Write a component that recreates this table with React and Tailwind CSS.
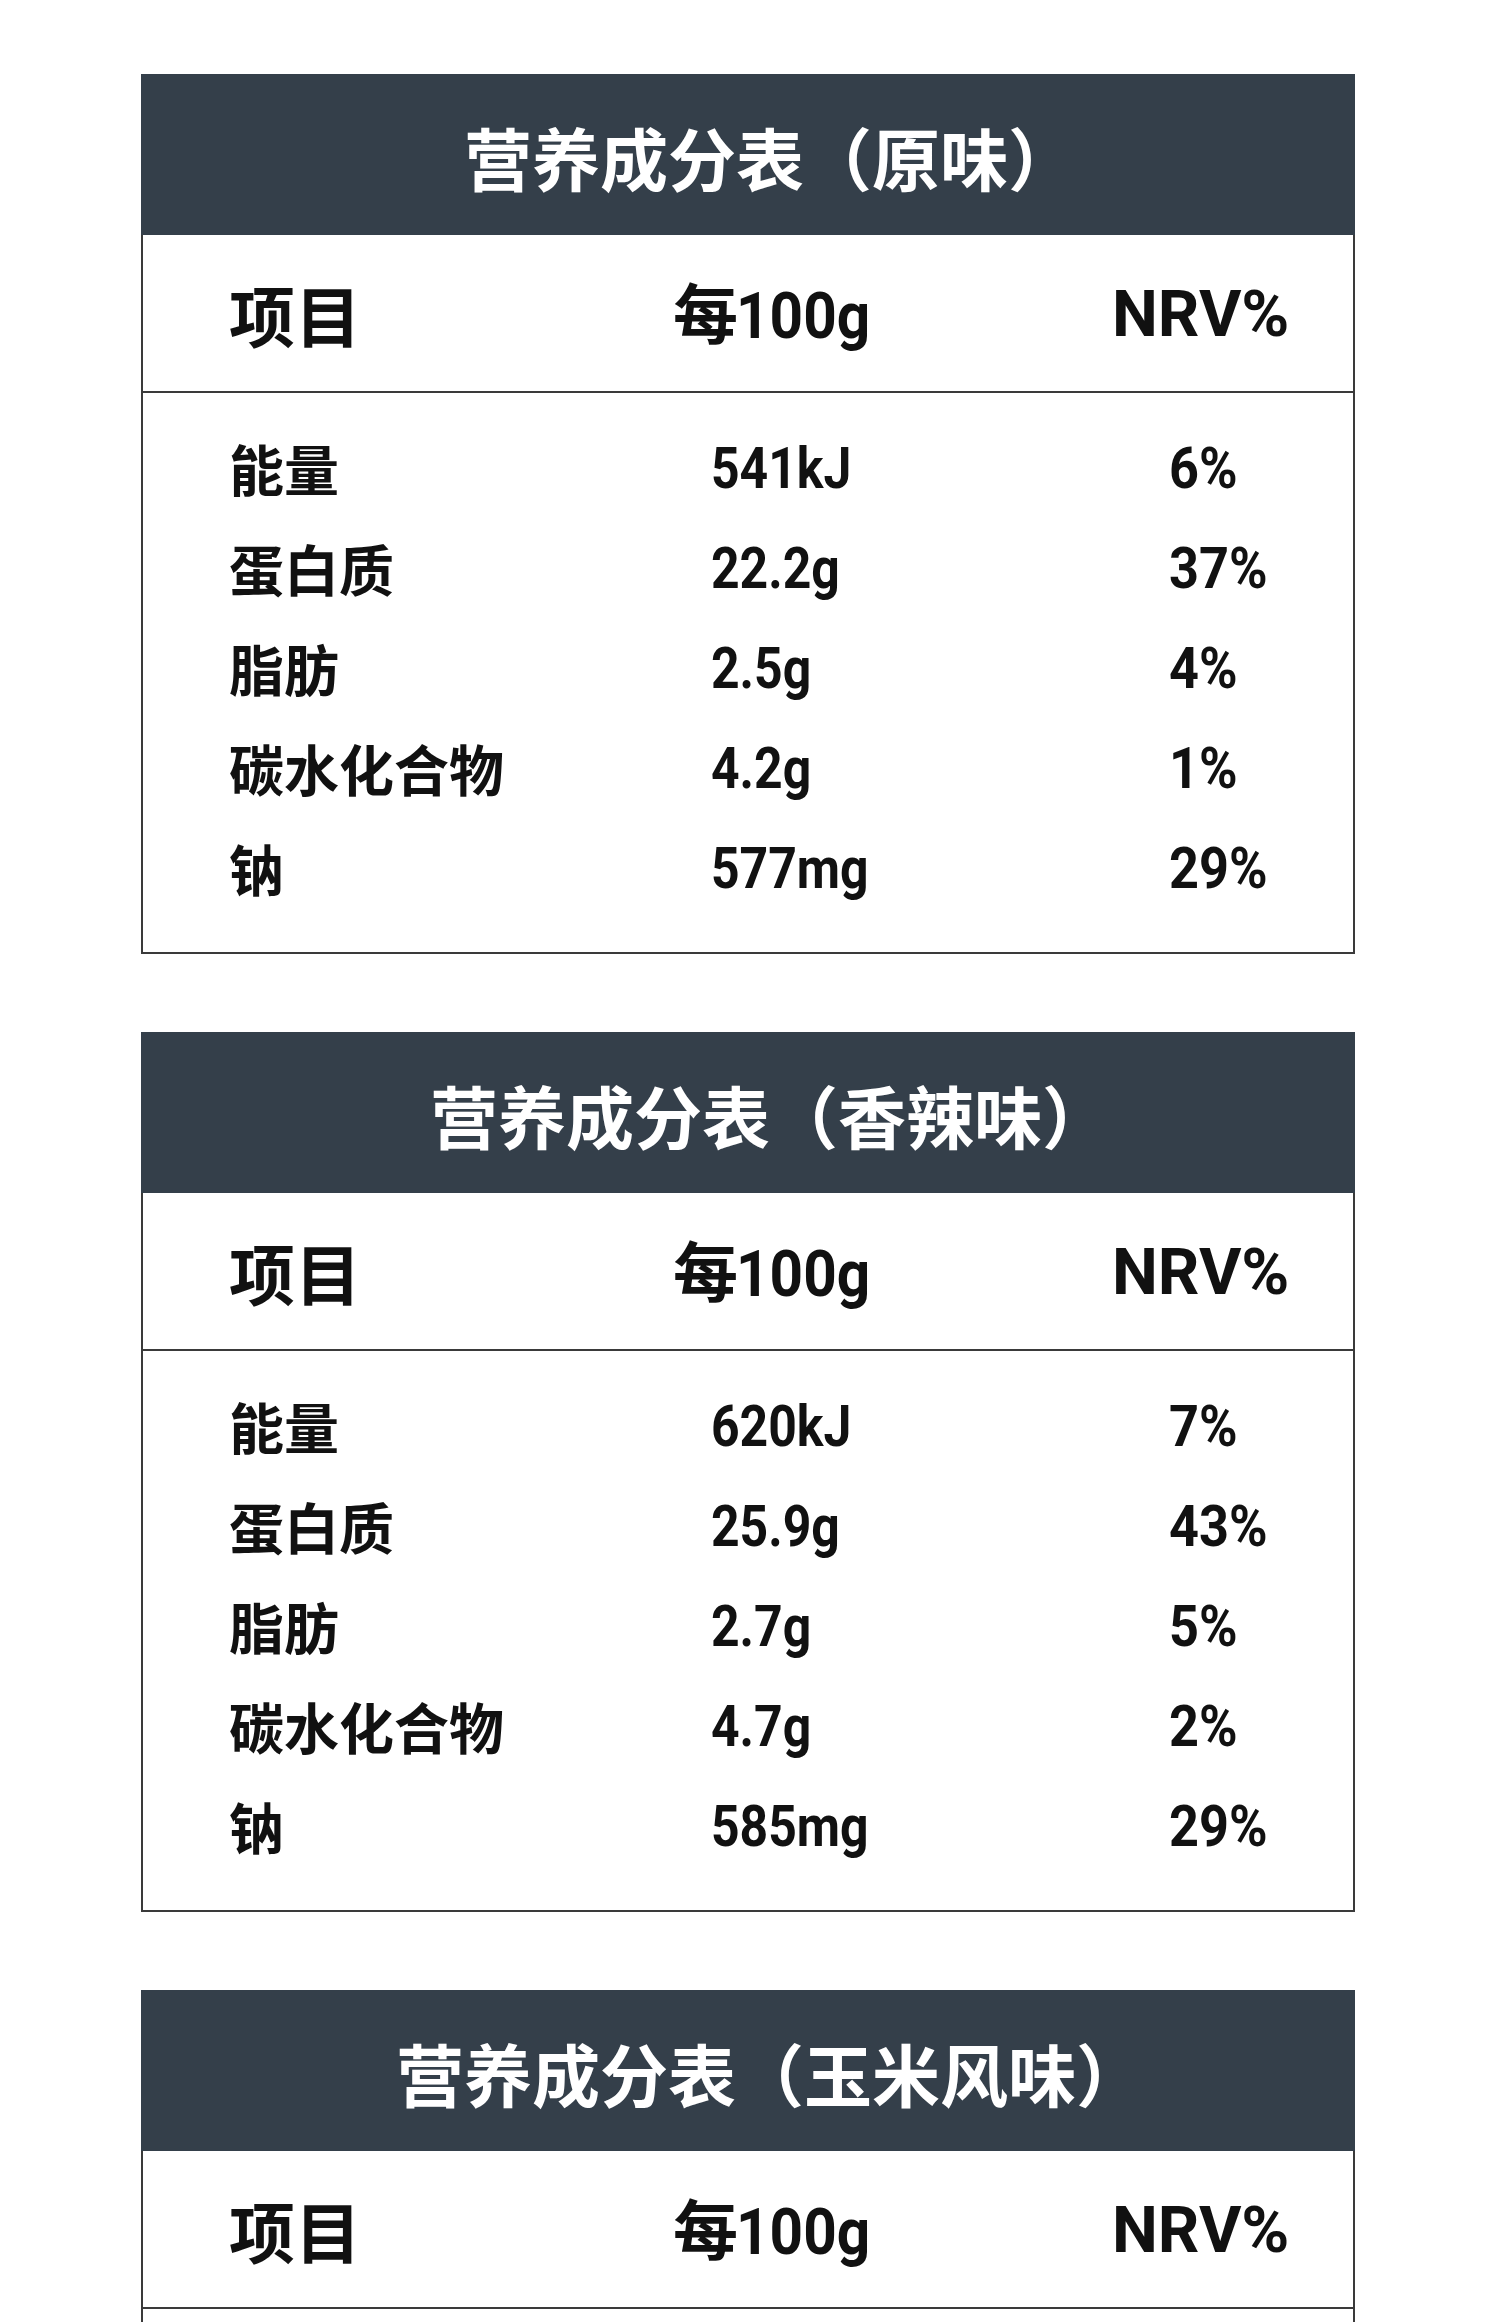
import React from "react";

const CJK = { fontFamily: '"Noto Sans CJK SC", "Noto Sans", sans-serif' };

const tables = [
  {
    title: "营养成分表（原味）",
    rows: [
      ["能量", "541kJ", "6%"],
      ["蛋白质", "22.2g", "37%"],
      ["脂肪", "2.5g", "4%"],
      ["碳水化合物", "4.2g", "1%"],
      ["钠", "577mg", "29%"],
    ],
  },
  {
    title: "营养成分表（香辣味）",
    rows: [
      ["能量", "620kJ", "7%"],
      ["蛋白质", "25.9g", "43%"],
      ["脂肪", "2.7g", "5%"],
      ["碳水化合物", "4.7g", "2%"],
      ["钠", "585mg", "29%"],
    ],
  },
  {
    title: "营养成分表（玉米风味）",
    rows: [],
  },
];

function Num({ children, className = "" }) {
  return (
    <span
      className={"inline-block origin-left font-bold text-[#111] " + className}
      style={{ fontFamily: 'Roboto, "Noto Sans CJK SC", sans-serif' }}
    >
      {children}
    </span>
  );
}

function Table({ t }) {
  return (
    <div className="w-[1214px]">
      <div className="h-[161px] bg-[#343f4a] flex items-center justify-center">
        <span className="text-white text-[68px] font-bold leading-none pt-[4px] ml-[44px]" style={CJK}>
          {t.title}
        </span>
      </div>
      <div className="border-x-2 border-b-2 border-[#3a3a3a] bg-white">
        <div className="h-[158px] flex items-center border-b-2 border-[#3a3a3a]">
          <div className="w-[530px] pl-[86px] text-[66px] font-bold text-[#111] leading-none" style={CJK}>
            项目
          </div>
          <div className="w-[442px] text-[65px] leading-none flex items-baseline">
            <span className="font-bold text-[#111]" style={CJK}>每</span>
            <Num className="scale-x-[0.9] -ml-[2px]">100g</Num>
          </div>
          <div className="flex-1 text-[65px] leading-none -ml-[3px]">
            <Num>NRV%</Num>
          </div>
        </div>
        {t.rows.length > 0 ? (
          <div className="pt-[24px] pb-[35px]">
            {t.rows.map((r) => (
              <div key={r[0]} className="h-[100px] flex items-center">
                <div className="w-[570px] pl-[86px] text-[55px] font-bold text-[#111] leading-none" style={CJK}>
                  {r[0]}
                </div>
                <div className="w-[460px] text-[58px] leading-none -ml-[2px]">
                  <Num className="scale-x-[0.86]">{r[1]}</Num>
                </div>
                <div className="flex-1 text-[58px] leading-none -ml-[2px]">
                  <Num className="scale-x-[0.9]">{r[2]}</Num>
                </div>
              </div>
            ))}
          </div>
        ) : (
          <div className="h-[559px]" />
        )}
      </div>
    </div>
  );
}

export default function App() {
  return (
    <div className="min-h-[2322px] bg-white pt-[74px] pl-[141px] flex flex-col gap-[78px]">
      {tables.map((t) => (
        <Table key={t.title} t={t} />
      ))}
    </div>
  );
}
